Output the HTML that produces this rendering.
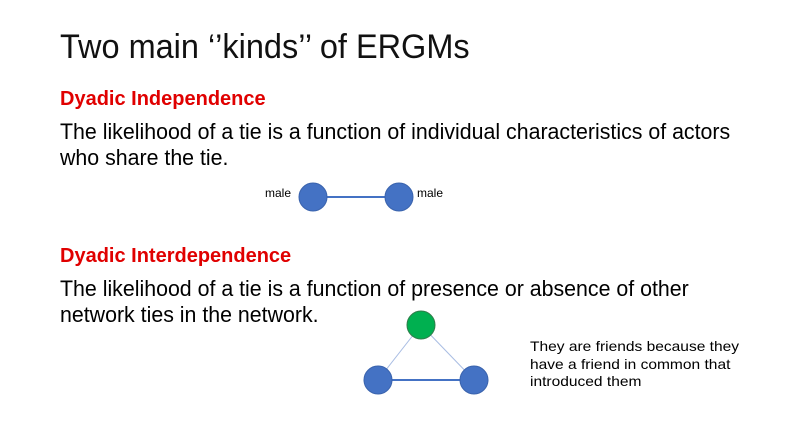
<!DOCTYPE html>
<html><head><meta charset="utf-8"><style>
body{margin:0;width:793px;height:447px;background:#fff;position:relative;overflow:hidden;font-family:"Liberation Sans",sans-serif;color:#000}
.t{position:absolute;white-space:nowrap;transform-origin:0 0}
</style></head><body>
<div class="t" style="left:60px;top:28px;font-size:34px;color:#111;transform:scaleX(0.955)">Two main ‘’kinds’’ of ERGMs</div>
<div class="t" style="left:60px;top:88px;font-size:20px;font-weight:bold;color:#e00000;transform:scaleX(1.0)">Dyadic Independence</div>
<div class="t" style="left:60px;top:119px;font-size:22px;line-height:26px;transform:scaleX(0.97)">The likelihood of a tie is a function of individual characteristics of actors<br>who share the tie.</div>
<div class="t" style="left:265px;top:186px;font-size:12px;transform:scaleX(1.0)">male</div>
<div class="t" style="left:417px;top:186px;font-size:12px;transform:scaleX(1.0)">male</div>
<div class="t" style="left:60px;top:245px;font-size:20px;font-weight:bold;color:#e00000;transform:scaleX(1.0)">Dyadic Interdependence</div>
<div class="t" style="left:60px;top:276px;font-size:22px;line-height:26px;transform:scaleX(0.97)">The likelihood of a tie is a function of presence or absence of other<br>network ties in the network.</div>
<div class="t" style="left:530px;top:338px;font-size:14px;line-height:17.5px;transform:scaleX(1.11)">They are friends because they<br>have a friend in common that<br>introduced them</div>
<svg width="793" height="447" style="position:absolute;left:0;top:0">
<line x1="313" y1="197" x2="399" y2="197" stroke="#4472c4" stroke-width="2"/>
<circle cx="313" cy="197" r="14" fill="#4472c4" stroke="#3a63ad"/>
<circle cx="399" cy="197" r="14" fill="#4472c4" stroke="#3a63ad"/>
<line x1="421" y1="325" x2="378" y2="380" stroke="#a9bde3" stroke-width="1"/>
<line x1="421" y1="325" x2="474" y2="380" stroke="#a9bde3" stroke-width="1"/>
<line x1="378" y1="380" x2="474" y2="380" stroke="#4472c4" stroke-width="2"/>
<circle cx="421" cy="325" r="14" fill="#00b050" stroke="#2f7d4a"/>
<circle cx="378" cy="380" r="14" fill="#4472c4" stroke="#3a63ad"/>
<circle cx="474" cy="380" r="14" fill="#4472c4" stroke="#3a63ad"/>
</svg>
</body></html>
